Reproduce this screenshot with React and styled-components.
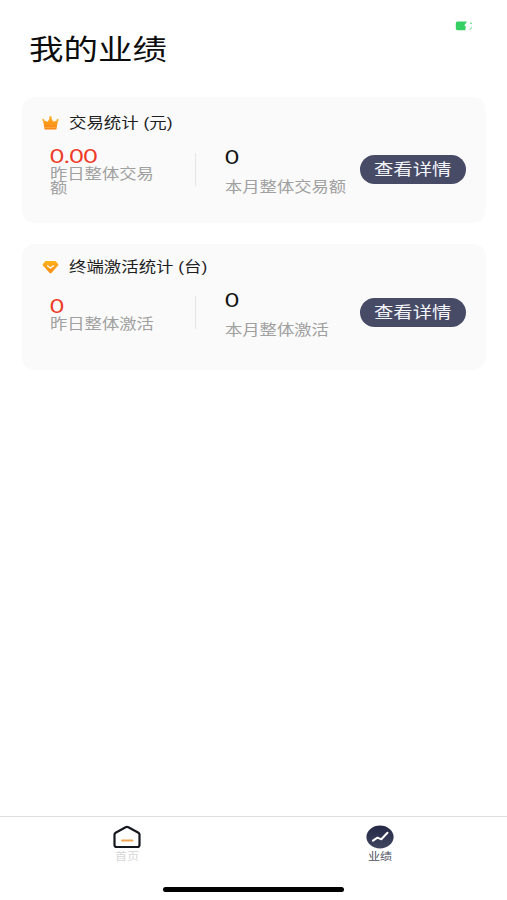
import React from 'react'
import styled, { createGlobalStyle } from 'styled-components'

const App = () => {
    return (
        <Screen>
            <GlobalStyle />
            <StatusBar>
                <BatteryIcon />
            </StatusBar>
            <Title><Wide>我的业绩</Wide></Title>
            <Cards>
                <StatCard
                    icon={<CrownIcon />}
                    title="交易统计 (元)"
                    top={10}
                    bodyHeight={60}
                    yesterday="0.00"
                    yesterdayLabel="昨日整体交易额"
                    month="0"
                    monthLabel="本月整体交易额"
                />
                <StatCard
                    icon={<DiamondIcon />}
                    title="终端激活统计 (台)"
                    top={7}
                    bodyHeight={58}
                    yesterday="0"
                    yesterdayLabel="昨日整体激活"
                    month="0"
                    monthLabel="本月整体激活"
                />
            </Cards>
            <TabBar>
                <Tab>
                    <HomeIcon />
                    <TabLabel $color="#d6d6d6">首页</TabLabel>
                </Tab>
                <Tab>
                    <ChartIcon />
                    <TabLabel $color="#4d5060">业绩</TabLabel>
                </Tab>
            </TabBar>
            <HomeIndicator />
        </Screen>
    )
}

export default App

const StatCard = ({ icon, title, top, bodyHeight, yesterday, yesterdayLabel, month, monthLabel }) => (
    <Card $top={top}>
        <CardHeader>
            {icon}
            <CardTitle>{title}</CardTitle>
        </CardHeader>
        <CardBody $height={bodyHeight}>
            <Yesterday>
                <Value $color="#ee3b28">{yesterday}</Value>
                <Label $width="90px">{yesterdayLabel}</Label>
            </Yesterday>
            <Divider />
            <Month>
                <Value $color="#141414">{month}</Value>
                <Label>{monthLabel}</Label>
            </Month>
            <Button><Wide>查看详情</Wide></Button>
        </CardBody>
    </Card>
)

const BatteryIcon = () => (
    <svg width="18" height="10" viewBox="0 0 18 10">
        <path d="M2.500.5h9.500L9.300 4.600 10.800 5.500 10.300 9.200H2.500Q.8 9.200.8 7.500V2.200Q.8.5 2.500.5Z" fill="#35cf63" />
        <path d="M15 3 15.500 1Q17 1.300 17 3ZM14 9l2.800-3.500q.4 3-2.800 3.500Z" fill="#6fdc90" />
    </svg>
)

const CrownIcon = () => (
    <svg width="17" height="14" viewBox="0 0 17 14">
        <defs>
            <linearGradient id="crown" x1="0" y1="0" x2="0" y2="1">
                <stop offset="0" stopColor="#ffad1f" />
                <stop offset="1" stopColor="#f98517" />
            </linearGradient>
        </defs>
        <path d="M1 4 5.600 5.700 8.500 1l2.900 4.700L16 4l-1.600 9.500H2.600Z" fill="url(#crown)" />
        <circle cx="1.300" cy="4" r="1.100" fill="#ffad1f" />
        <circle cx="8.500" cy="1.500" r="1.300" fill="#ffad1f" />
        <circle cx="15.700" cy="4" r="1.100" fill="#ffad1f" />
        <path d="M2.500 11.500h12" stroke="#ffb04c" strokeWidth=".7" />
    </svg>
)

const DiamondIcon = () => (
    <svg width="17" height="14" viewBox="0 0 17 14">
        <defs>
            <linearGradient id="diamond" x1="0" y1="0" x2="0" y2="1">
                <stop offset="0" stopColor="#ffb31a" />
                <stop offset="1" stopColor="#f98a14" />
            </linearGradient>
        </defs>
        <path d="M4 1h9q.6 0 1 .4l2.200 2.800q.5.7-.1 1.300L9.300 13q-.8.600-1.600 0L.9 5.500Q.3 4.900.8 4.200L3 1.400Q3.400 1 4 1Z" fill="url(#diamond)" />
        <path d="M5.500 5.800 8.500 8l3-2.200" fill="none" stroke="#fff" strokeWidth="1.300" strokeLinecap="round" strokeLinejoin="round" />
    </svg>
)

const HomeIcon = () => (
    <svg width="28" height="24" viewBox="0 0 28 24">
        <path d="M12.600 2.200 2.600 7.700Q1.500 8.400 1.500 9.600V20q0 2 2.200 2h20.600q2.200 0 2.200-2V9.600q0-1.200-1.100-1.900L15.400 2.200Q14 1.500 12.600 2.200Z" fill="#fff" stroke="#15181e" strokeWidth="2.200" strokeLinejoin="round" />
        <path d="M9 15.500h10.500" stroke="#eda552" strokeWidth="1.800" strokeLinecap="round" />
    </svg>
)

const ChartIcon = () => (
    <svg width="28" height="24" viewBox="0 0 28 24">
        <defs>
            <linearGradient id="disc" x1="0" y1="0" x2="0" y2="1">
                <stop offset="0" stopColor="#242946" />
                <stop offset="1" stopColor="#40455f" />
            </linearGradient>
        </defs>
        <ellipse cx="14" cy="12" rx="13.600" ry="11.400" fill="url(#disc)" />
        <path d="M7 15.700 11.500 12.700 15.300 14.300 21.500 7.700" fill="none" stroke="#fff" strokeWidth="2" strokeLinecap="round" strokeLinejoin="round" />
    </svg>
)

const GlobalStyle = createGlobalStyle`
body {
    margin: 0;
    background: #fff;
    font-family: "Liberation Sans", "Noto Sans CJK SC", sans-serif;
}
`;

const Screen = styled.div`
box-sizing: border-box;
width: 507px;
height: 900px;
display: flex;
flex-direction: column;
overflow: hidden;
background: #fff;
`;

const StatusBar = styled.div`
display: flex;
justify-content: flex-end;
height: 32px;
padding: 21px 34px 0 0;
box-sizing: border-box;
`;

const Title = styled.h1`
margin: 0;
padding-left: 29px;
height: 65px;
font-size: 28.500px;
font-weight: 400;
line-height: 36px;
color: #0c0c0c;
`;

/* expanded letterforms, the box keeps its normal width */
const Wide = styled.span`
display: inline-block;
white-space: nowrap;
transform: scaleX(1.21);
transform-origin: left;
`;

const Cards = styled.div`
flex: 1;
display: flex;
flex-direction: column;
gap: 21px;
padding: 0 21px 0 22px;
`;

const Card = styled.section`
box-sizing: border-box;
height: 126px;
padding-top: ${p => p.$top}px;
border-radius: 13px;
background: #fafafa;
`;

const CardHeader = styled.div`
display: flex;
align-items: center;
gap: 10px;
height: 32px;
padding-left: 20px;
`;

const CardTitle = styled(Wide)`
font-size: 14.400px;
line-height: 20px;
color: #1f1f1f;
`;

const CardBody = styled.div`
display: flex;
align-items: center;
height: ${p => p.$height}px;
padding: 0 20px 0 28px;
`;

const Yesterday = styled.div`
width: 145px;
`;

const Month = styled.div`
flex: 1;
display: flex;
flex-direction: column;
gap: 12px;
padding: 1px 0 0 29px;
`;

const Value = styled.div`
width: 60px;
font-family: Lato, "Liberation Sans", sans-serif;
font-size: 20px;
line-height: 22px;
color: ${p => p.$color};
transform: scaleX(1.2);
transform-origin: left;
`;

const Label = styled.div`
width: ${p => p.$width || '110px'};
padding-top: 1px;
font-size: 14.300px;
line-height: 14px;
color: #a0a0a0;
transform: scaleX(1.21);
transform-origin: left;
`;

const Divider = styled.div`
width: 1px;
height: 33px;
background: #e6e6e6;
`;

const Button = styled.button`
width: 106px;
height: 29px;
border: 0;
border-radius: 15px;
padding: 1px 0 0 14px;
text-align: left;
background: #474b66;
color: #f4f5fa;
font-family: inherit;
font-size: 16px;
line-height: 28px;
`;

const TabBar = styled.nav`
box-sizing: border-box;
display: flex;
height: 65px;
border-top: 1px solid #dedede;
`;

const Tab = styled.div`
flex: 1;
display: flex;
flex-direction: column;
align-items: center;
padding-top: 8px;
`;

const TabLabel = styled.span`
margin-top: 1px;
font-size: 10px;
line-height: 14px;
color: ${p => p.$color};
transform: scaleX(1.21);
`;

const HomeIndicator = styled.div`
width: 181px;
height: 5px;
margin: 6px auto 8px;
border-radius: 3px;
background: #000;
`;
